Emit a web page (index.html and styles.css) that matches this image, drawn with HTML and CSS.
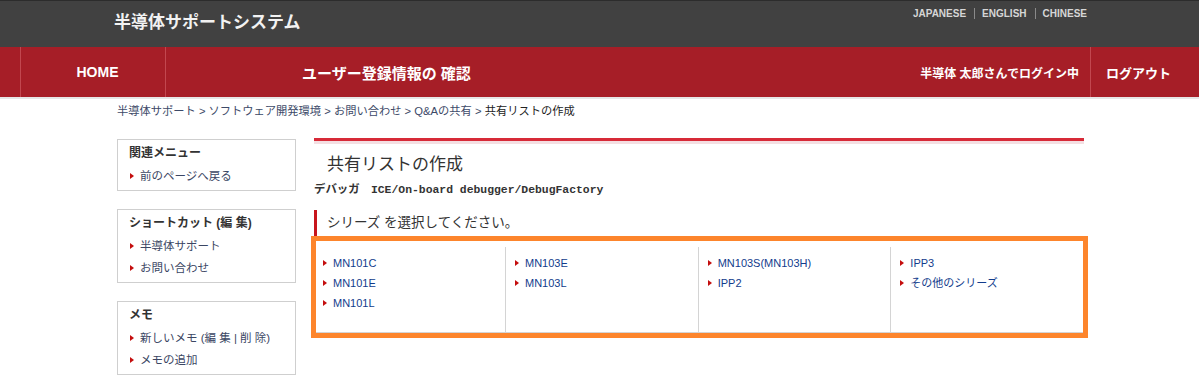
FILE: index.html
```html
<!DOCTYPE html>
<html lang="ja">
<head>
<meta charset="utf-8">
<title>共有リストの作成</title>
<link rel="stylesheet" href="styles.css">
</head>
<body>
<header class="topbar">
  <div class="topbar-inner">
    <div class="site-title">半導体サポートシステム</div>
    <ul class="lang">
      <li><a href="#">JAPANESE</a></li>
      <li><a href="#">ENGLISH</a></li>
      <li><a href="#">CHINESE</a></li>
    </ul>
  </div>
</header>
<nav class="gnav">
  <a class="gnav-home" href="#">HOME</a>
  <a class="gnav-user" href="#">ユーザー登録情報の 確認</a>
  <span class="gnav-login">半導体 太郎さんでログイン中</span>
  <a class="gnav-logout" href="#">ログアウト</a>
</nav>
<div class="wrap">
  <div class="crumbs">
    <a href="#">半導体サポート</a> &gt; <a href="#">ソフトウェア開発環境</a> &gt; <a href="#">お問い合わせ</a> &gt; <a href="#">Q&amp;Aの共有</a> &gt; <span class="crumb-current">共有リストの作成</span>
  </div>
  <div class="content">
    <aside class="side">
      <div class="side-box">
        <div class="side-title">関連メニュー</div>
        <ul class="side-list">
          <li><a href="#">前のページへ戻る</a></li>
        </ul>
      </div>
      <div class="side-box">
        <div class="side-title">ショートカット (編 集)</div>
        <ul class="side-list">
          <li><a href="#">半導体サポート</a></li>
          <li><a href="#">お問い合わせ</a></li>
        </ul>
      </div>
      <div class="side-box">
        <div class="side-title">メモ</div>
        <ul class="side-list">
          <li><a href="#">新しいメモ (編 集 | 削 除)</a></li>
          <li><a href="#">メモの追加</a></li>
        </ul>
      </div>
    </aside>
    <main class="main">
      <div class="title-rule"></div>
      <h1 class="page-title">共有リストの作成</h1>
      <p class="subtitle">デバッガ　ICE/On-board debugger/DebugFactory</p>
      <h2 class="section-head">シリーズ を選択してください。</h2>
      <div class="series">
        <div class="series-grid">
          <ul class="series-col">
            <li><a href="#">MN101C</a></li>
            <li><a href="#">MN101E</a></li>
            <li><a href="#">MN101L</a></li>
          </ul>
          <ul class="series-col">
            <li><a href="#">MN103E</a></li>
            <li><a href="#">MN103L</a></li>
          </ul>
          <ul class="series-col">
            <li><a href="#">MN103S(MN103H)</a></li>
            <li><a href="#">IPP2</a></li>
          </ul>
          <ul class="series-col">
            <li><a href="#">IPP3</a></li>
            <li><a href="#">その他のシリーズ</a></li>
          </ul>
        </div>
      </div>
    </main>
  </div>
</div>
</body>
</html>
```
FILE: styles.css
```css
* { box-sizing: border-box; }
html, body { margin: 0; padding: 0; }
body {
  font-family: "Liberation Sans", "Noto Sans CJK JP", sans-serif;
  color: #333;
  background: #fff;
}
a { text-decoration: none; color: inherit; }
ul { list-style: none; margin: 0; padding: 0; }
h1, h2, p { margin: 0; }

/* top dark bar */
.topbar {
  height: 47px;
  background: #414141;
  border-top: 1px solid #2c2c2c;
}
.topbar-inner {
  margin-left: 114px;
  width: 973px;
  height: 46px;
  display: flex;
  justify-content: space-between;
  align-items: flex-start;
}
.site-title {
  font-size: 17px;
  font-weight: bold;
  color: #f2f2f2;
  line-height: 20px;
  padding-top: 12px;
}
.lang {
  display: flex;
  margin-top: 7px;
}
.lang li {
  font-size: 10px;
  font-weight: bold;
  line-height: 11px;
  color: #d6d6d6;
  padding: 0 8px 0 7px;
  border-left: 1px solid #8a8a8a;
}
.lang li:first-child { border-left: 0; padding-left: 0; }
.lang li:last-child { padding-right: 0; }

/* red global nav */
.gnav {
  display: flex;
  height: 52px;
  padding-left: 20px;
  background: #a61e27;
  border-bottom: 2px solid #e6e6e6;
  color: #fff;
  font-weight: bold;
}
.gnav a, .gnav span { display: flex; align-items: center; }
.gnav-home {
  width: 146px;
  justify-content: center;
  padding-left: 9px;
  font-size: 14px;
  border-left: 1px solid #c2474f;
  border-right: 1px solid #c2474f;
}
.gnav-user {
  padding-left: 136px;
  font-size: 15px;
}
.gnav-login {
  margin-left: auto;
  padding-right: 11px;
  font-size: 12px;
}
.gnav-logout {
  padding: 0 28px 0 15px;
  font-size: 13px;
  border-left: 1px solid #c2474f;
}

/* page body */
.wrap {
  margin-left: 117px;
  width: 971px;
}
.crumbs {
  padding-top: 4px;
  line-height: 16px;
  font-size: 11.25px;
  color: #3d4a68;
}
.crumb-current { color: #222; }

.content {
  display: flex;
  gap: 18px;
  margin-top: 19px;
}
.side {
  width: 179px;
  flex: none;
  display: flex;
  flex-direction: column;
  gap: 18px;
  margin-top: 1px;
}
.side-box {
  border: 1px solid #cfcfcf;
  padding: 5px 8px 3px 11px;
}
.side-title {
  font-size: 12px;
  font-weight: bold;
  line-height: 16px;
  color: #333;
  margin-bottom: 4px;
}
.side-list li,
.series-col li {
  display: flex;
  align-items: center;
}
.side-list li {
  font-size: 11.5px;
  line-height: 22px;
  color: #3b4663;
  padding-left: 1px;
}
.side-list li::before,
.series-col li::before {
  content: "";
  flex: none;
  width: 0;
  height: 0;
  border-left: 4px solid #c40e0e;
  border-top: 3px solid transparent;
  border-bottom: 3px solid transparent;
  margin-right: 6px;
}

.main {
  width: 770px;
  flex: none;
}
.title-rule {
  height: 6px;
  border-top: 3px solid #d72a38;
  background: #f4dfe2;
}
.page-title {
  margin-top: 9px;
  padding-left: 13px;
  font-size: 17px;
  font-weight: normal;
  line-height: 24px;
  color: #333;
}
.subtitle {
  margin-top: 5px;
  font-family: "Liberation Mono", "Noto Sans CJK JP", monospace;
  font-size: 11.4px;
  font-weight: bold;
  line-height: 16px;
  color: #333;
}
.section-head {
  margin-top: 12px;
  height: 26px;
  line-height: 26px;
  border-left: 3px solid #c8161d;
  padding-left: 10px;
  font-size: 13.5px;
  font-weight: normal;
  color: #333;
}
.series {
  margin: 0 -4px 0 -3px;
  border: 5px solid #fd852c;
  padding-top: 6px;
}
.series-grid {
  display: grid;
  grid-template-columns: 189px 1fr 1fr 1fr;
  border-bottom: 1px solid #d4d4d4;
}
.series-col {
  min-height: 85px;
  padding: 6px 0 19px 9px;
  border-left: 1px solid #d4d4d4;
}
.series-col:first-child {
  border-left: 0;
  padding-left: 7px;
}
.series-col li {
  font-size: 11px;
  line-height: 20px;
  color: #123c8c;
}
```
